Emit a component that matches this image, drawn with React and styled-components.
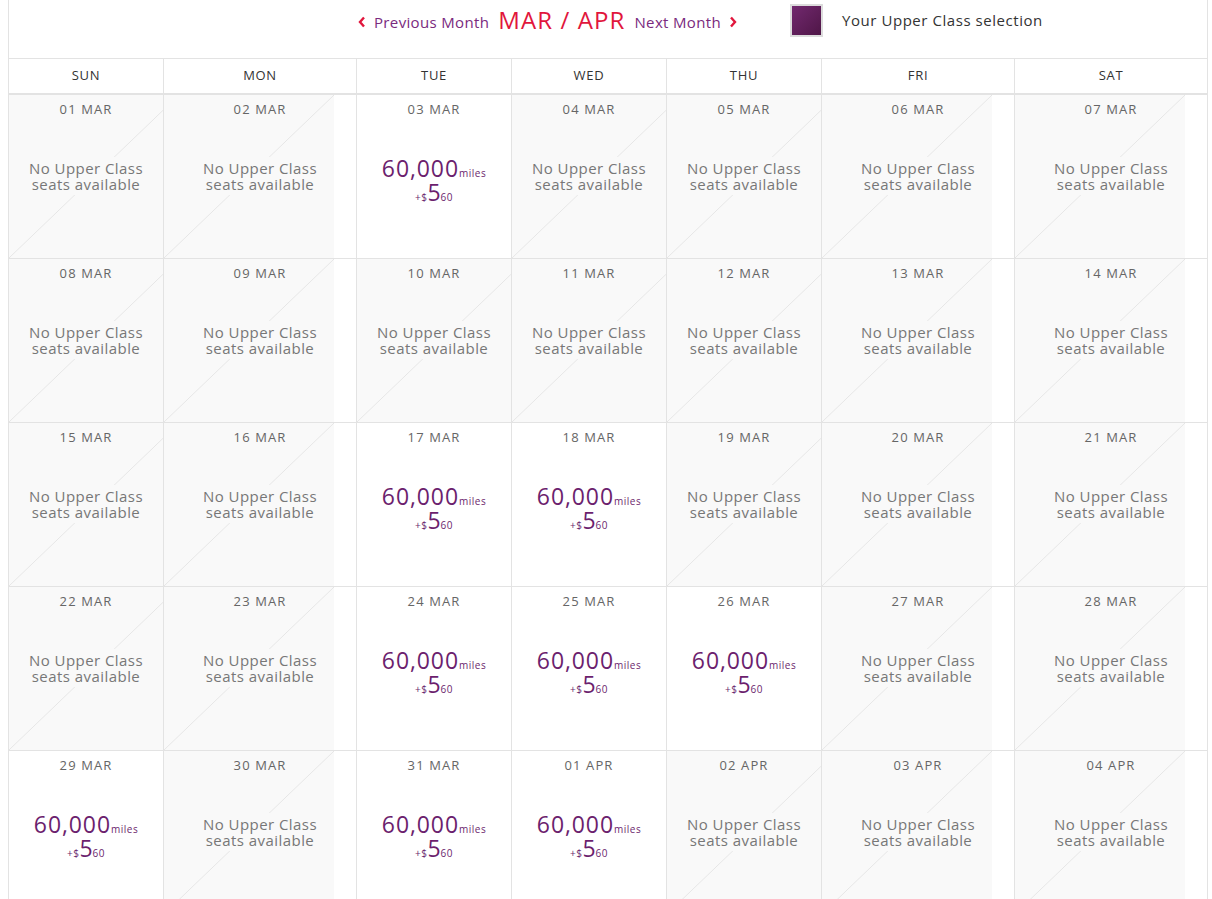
import React from 'react';
import styled, { createGlobalStyle } from 'styled-components';

const Global = createGlobalStyle`
  html, body { margin: 0; padding: 0; background: #fff; }
  body { font-family: 'Open Sans', 'Liberation Sans', sans-serif; color: #333; }
  * { box-sizing: border-box; }
`;

const Page = styled.div`
  margin-left: 8px;
  width: 1200px;
  border-left: 1px solid #e3e3e3;
  border-right: 1px solid #e3e3e3;
`;

const TopBar = styled.div`
  height: 58px;
  display: flex;
  align-items: flex-start;
  padding: 4px 0 0 349px;
`;

const Nav = styled.div`
  display: flex;
  align-items: center;
  height: 32px;
  gap: 9px;
`;

const NavLink = styled.a`
  display: flex;
  align-items: center;
  gap: 8px;
  font-size: 15px;
  letter-spacing: 0.35px;
  color: #7a2a7e;
  text-decoration: none;
  cursor: pointer;
  margin-top: 3px;
`;

const Chevron = styled.svg`
  width: 8px;
  height: 12px;
  stroke: #e1163c;
  stroke-width: 2.4;
  fill: none;
`;

const MonthTitle = styled.span`
  font-size: 24px;
  color: #e1163c;
  letter-spacing: 1.1px;
  line-height: 1;
`;

const Legend = styled.div`
  display: flex;
  align-items: center;
  margin-left: 53px;
  gap: 19px;
`;

const Swatch = styled.div`
  width: 33px;
  height: 33px;
  border: 2px solid #dcdcdc;
  background: linear-gradient(135deg, #72296f 0%, #4f1647 100%);
`;

const LegendText = styled.span`
  font-size: 15px;
  letter-spacing: 0.55px;
  color: #333;
  margin-top: -2px;
`;

const Grid = styled.div`
  display: grid;
  grid-template-columns: 155px 193px 155px 155px 155px 193px 192px;
`;

const HeadCell = styled.div`
  height: 37px;
  padding-bottom: 2px;
  border-top: 1px solid #e3e3e3;
  border-bottom: 2px solid #e3e3e3;
  border-right: ${p => (p.$last ? 'none' : '1px solid #e3e3e3')};
  display: flex;
  align-items: center;
  justify-content: center;
  font-size: 13px;
  letter-spacing: 0.7px;
  color: #333;
`;

const DayCell = styled.div`
  height: 164px;
  border-bottom: 1px solid #e3e3e3;
  border-right: ${p => (p.$last ? 'none' : '1px solid #e3e3e3')};
  overflow: hidden;
  display: grid;
  grid-template: 1fr / 1fr;
  justify-items: center;
  background: ${p =>
    p.$empty
      ? `linear-gradient(to bottom right, transparent calc(50% - 0.7px), #e6e6e6 50%, transparent calc(50% + 0.7px)) 0 0 / 170px 100% no-repeat,
         linear-gradient(#f9f9f9, #f9f9f9) 0 0 / 170px 100% no-repeat`
      : '#fff'};
`;

const DateLabel = styled.div`
  grid-area: 1 / 1;
  align-self: start;
  margin-top: 5px;
  font-size: 13px;
  letter-spacing: 1.1px;
  color: #666;
`;

const NoSeats = styled.div`
  grid-area: 1 / 1;
  align-self: center;
  display: inline-block;
  padding: 3px 0;
  background: #f9f9f9;
  text-align: center;
  font-size: 15px;
  line-height: 16px;
  letter-spacing: 0.45px;
  color: #777;
  margin-bottom: 1px;
`;

const Price = styled.div`
  grid-area: 1 / 1;
  align-self: center;
  text-align: center;
  color: #6c1f6e;
  margin-top: 7px;
`;

const Miles = styled.div`
  font-size: 23px;
  letter-spacing: 0.9px;
  line-height: 24px;
`;

const Small = styled.span`
  font-size: 10px;
  line-height: 1;
  letter-spacing: 0.5px;
`;

const Tax = styled.div`
  font-size: 23px;
  line-height: 24px;
`;

const ChevronLeft = () => (
  <Chevron viewBox="0 0 8 12"><path d="M6 1.5 L2 6 L6 10.5" /></Chevron>
);
const ChevronRight = () => (
  <Chevron viewBox="0 0 8 12"><path d="M2 1.5 L6 6 L2 10.5" /></Chevron>
);

const days = ['SUN', 'MON', 'TUE', 'WED', 'THU', 'FRI', 'SAT'];

const available = new Set(['03 MAR', '17 MAR', '18 MAR', '24 MAR', '25 MAR', '26 MAR', '29 MAR', '31 MAR', '01 APR']);

const dates = [];
for (let d = 1; d <= 31; d++) dates.push(`${String(d).padStart(2, '0')} MAR`);
for (let d = 1; d <= 4; d++) dates.push(`${String(d).padStart(2, '0')} APR`);

export default function App() {
  return (
    <>
      <Global />
      <Page>
        <TopBar>
          <Nav>
            <NavLink><ChevronLeft />Previous Month</NavLink>
            <MonthTitle>MAR / APR</MonthTitle>
            <NavLink>Next Month<ChevronRight /></NavLink>
          </Nav>
          <Legend>
            <Swatch />
            <LegendText>Your Upper Class selection</LegendText>
          </Legend>
        </TopBar>
        <Grid>
          {days.map((d, i) => (
            <HeadCell key={d} $last={i === 6}>{d}</HeadCell>
          ))}
          {dates.map((date, i) => {
            const ok = available.has(date);
            return (
              <DayCell key={date} $empty={!ok} $last={i % 7 === 6}>
                <DateLabel>{date}</DateLabel>
                {ok ? (
                  <Price>
                    <Miles>60,000<Small>miles</Small></Miles>
                    <Tax><Small>+$</Small>5<Small>60</Small></Tax>
                  </Price>
                ) : (
                  <NoSeats>No Upper Class<br />seats available</NoSeats>
                )}
              </DayCell>
            );
          })}
        </Grid>
      </Page>
    </>
  );
}
